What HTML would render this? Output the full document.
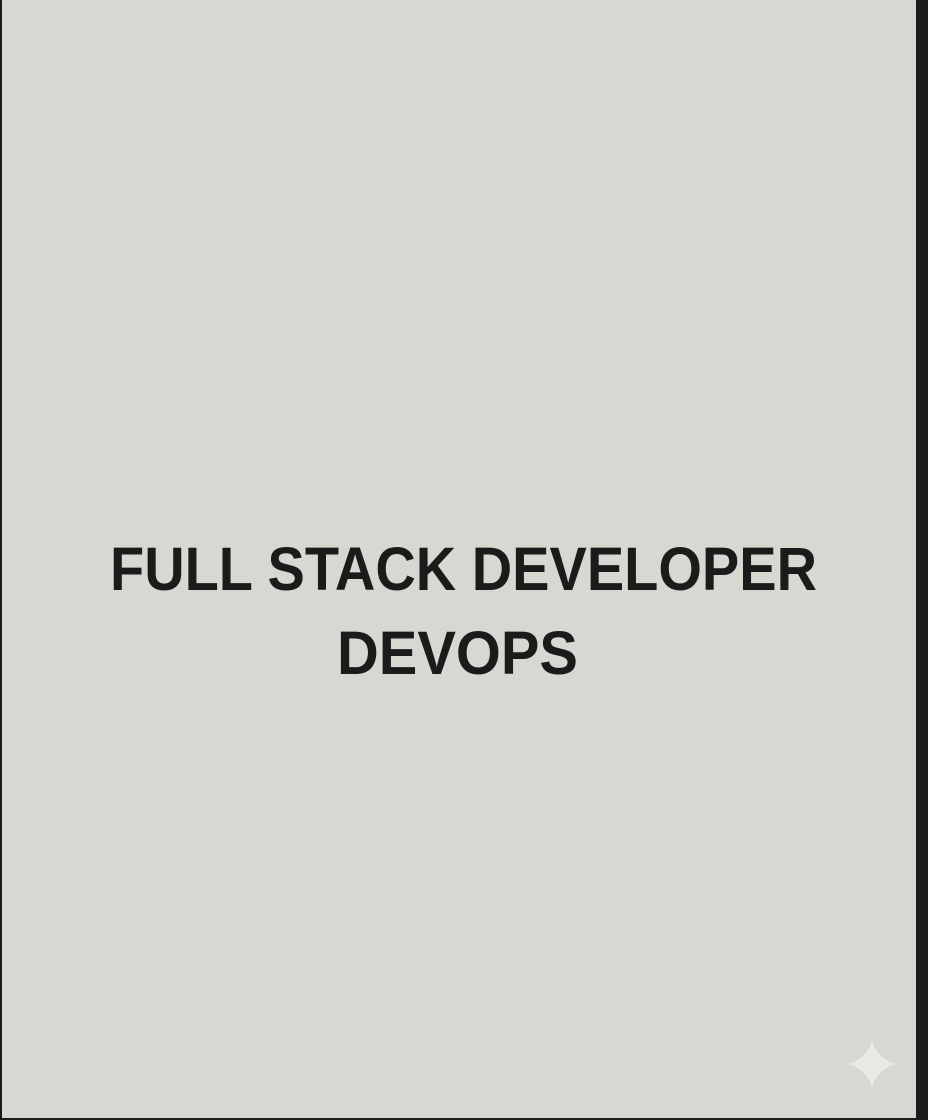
<!DOCTYPE html>
<html><head><meta charset="utf-8"><style>
html,body{margin:0;padding:0;}
body{width:928px;height:1120px;background:#1c1c1c;position:relative;overflow:hidden;}
.card{position:absolute;left:2px;top:0;width:914px;height:1118px;background:#d8d8d2;}
svg{position:absolute;left:0;top:0;}
</style></head><body>
<div class="card"></div>
<svg width="928" height="1120" viewBox="0 0 928 1120">
<text x="110" y="590" textLength="707" lengthAdjust="spacingAndGlyphs" font-family="Liberation Sans, sans-serif" font-weight="bold" font-size="61" fill="#1b1b1b">FULL STACK DEVELOPER</text>
<text x="337" y="674" textLength="241" lengthAdjust="spacingAndGlyphs" font-family="Liberation Sans, sans-serif" font-weight="bold" font-size="61" fill="#1b1b1b">DEVOPS</text>
<path d="M872 1040 Q876 1058 896 1064 Q876 1070 872 1088 Q868 1070 848 1064 Q868 1058 872 1040 Z" fill="#e9e9e5"/>
</svg>
</body></html>
